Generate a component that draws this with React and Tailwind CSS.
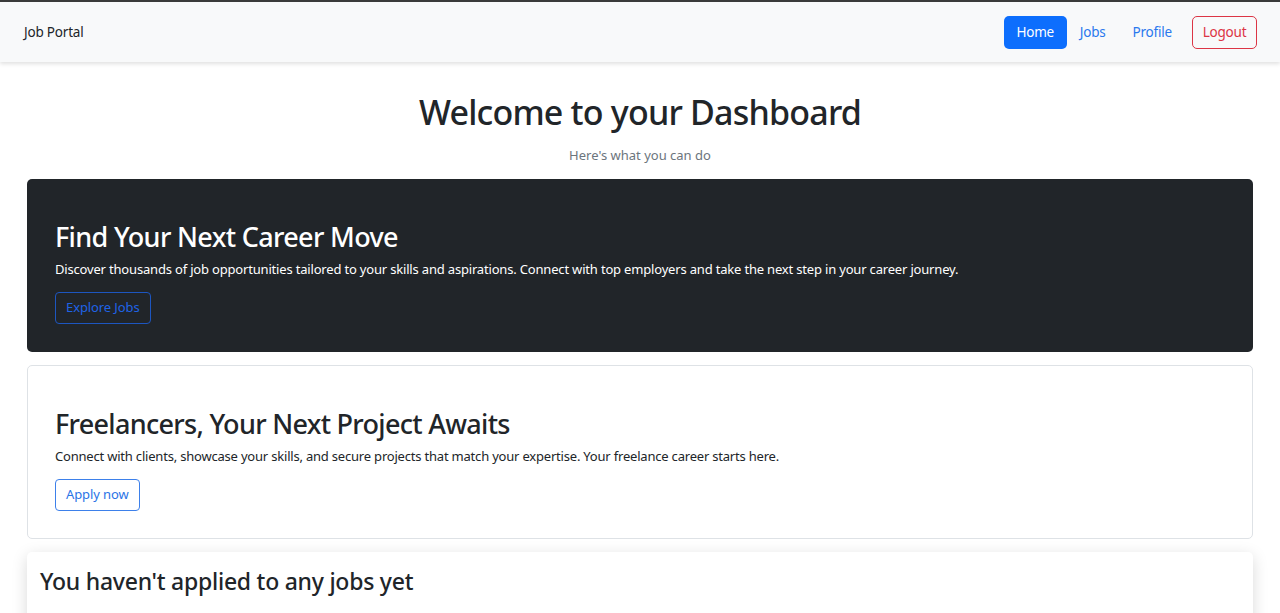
export default function App() {
  return (
    <div className="min-h-screen bg-white text-[#212529]" style={{ fontFamily: '"Noto Sans", "Open Sans", sans-serif' }}>
      {/* Navbar */}
      <nav className="border-t-2 border-[#3a3a3a] bg-[#f8f9fa] shadow-[0_2px_4px_rgba(0,0,0,0.12)]">
        <div className="flex h-[60px] items-center justify-between pl-6 pr-[23px]">
          <span className="text-[13.5px] tracking-[-0.2px] text-[#212529]">Job Portal</span>
          <div className="flex items-center text-[13.5px] tracking-[-0.2px]">
            <a className="flex h-[33px] w-[63px] items-center justify-center rounded-[5px] bg-[#0d6efd] text-white">Home</a>
            <a className="ml-[13px] text-[#2a78ee]">Jobs</a>
            <a className="ml-[27px] text-[#2a78ee]">Profile</a>
            <a className="ml-[20px] flex h-[33px] w-[65px] items-center justify-center rounded-[5px] border border-[#dc3545] text-[#dc3545]">Logout</a>
          </div>
        </div>
      </nav>

      <main className="px-[27px] pb-10">
        {/* Header */}
        <div className="pt-[30px] text-center">
          <h1 className="text-[34px] font-medium leading-[1.2] tracking-[-0.8px]">Welcome to your Dashboard</h1>
          <p className="mt-[12px] text-[13px] leading-[21px] text-[#6c757d]">Here's what you can do</p>
        </div>

        {/* Career card */}
        <section className="mt-[13px] rounded-[5px] bg-[#212529] px-[28px] pb-[28px] pt-[42px] text-white">
          <h2 className="text-[27px] font-medium leading-[1.2] tracking-[-0.65px]">Find Your Next Career Move</h2>
          <p className="mt-[6px] text-[13px] leading-[21px] tracking-[-0.18px]">
            Discover thousands of job opportunities tailored to your skills and aspirations. Connect with top employers and take the next step in your career journey.
          </p>
          <button className="mt-[12px] flex h-[32px] items-center rounded-[4px] border border-[#1d56c0] px-[10px] text-[13px] tracking-[-0.1px] text-[#1f63e6]">
            Explore Jobs
          </button>
        </section>

        {/* Freelance card */}
        <section className="mt-[13px] rounded-[5px] border border-[#dee2e6] bg-white px-[27px] pb-[27px] pt-[42px]">
          <h2 className="text-[27px] font-medium leading-[1.2] tracking-[-0.7px]">Freelancers, Your Next Project Awaits</h2>
          <p className="mt-[5px] text-[13px] leading-[21px] tracking-[-0.2px]">
            Connect with clients, showcase your skills, and secure projects that match your expertise. Your freelance career starts here.
          </p>
          <button className="mt-[12px] flex h-[32px] items-center rounded-[4px] border border-[#3d80ea] px-[10px] text-[13px] tracking-[-0.1px] text-[#2a74e6]">
            Apply now
          </button>
        </section>

        {/* Applications card */}
        <section className="mt-[13px] rounded-[5px] bg-white px-[13px] pb-[40px] pt-[16px] shadow-[0_4px_16px_rgba(0,0,0,0.15)]">
          <h3 className="text-[23px] font-medium leading-[1.2] tracking-[-0.25px]">You haven't applied to any jobs yet</h3>
        </section>
      </main>
    </div>
  );
}
